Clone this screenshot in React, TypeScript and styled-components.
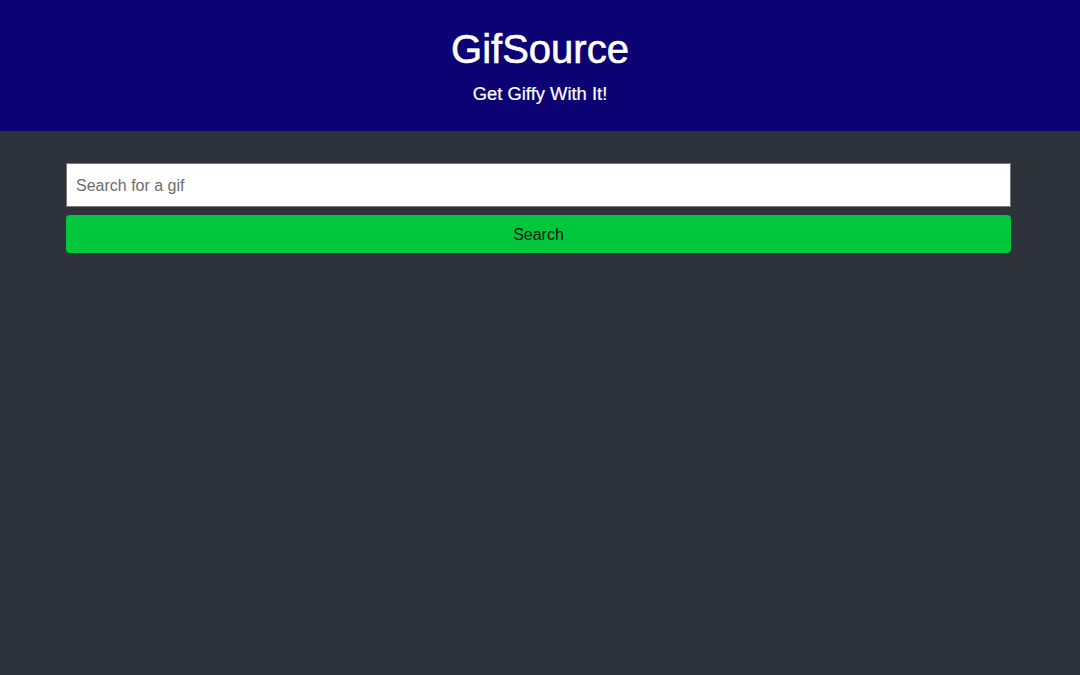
import React from "react";
import styled, { createGlobalStyle } from "styled-components";

const GlobalStyle = createGlobalStyle`
  html, body {
    margin: 0;
    padding: 0;
    background: #2e323b;
    font-family: "Liberation Sans", Arial, sans-serif;
  }
  #root { min-height: 675px; background: #2e323b; }
`;

const Header = styled.header`
  background: #0c0273;
  height: 131px;
  box-sizing: border-box;
  padding-top: 26px;
  display: flex;
  flex-direction: column;
  align-items: center;
  color: #ffffff;
`;

const Title = styled.h1`
  margin: 0;
  font-size: 40px;
  font-weight: 400;
  line-height: 46px;
  -webkit-text-stroke: 0.6px #ffffff;
`;

const Subtitle = styled.p`
  margin: 11px 0 0;
  font-size: 18.4px;
  line-height: 22px;
  -webkit-text-stroke: 0.2px #ffffff;
`;

const Main = styled.main`
  padding: 32px 69px 0 66px;
  display: flex;
  flex-direction: column;
  gap: 8px;
`;

const Input = styled.input`
  box-sizing: border-box;
  width: 100%;
  height: 44px;
  border: 1px solid #7a7a7a;
  border-radius: 0;
  padding: 2px 9px 0;
  font-family: inherit;
  font-size: 16px;
  color: #333;
  background: #fff;
  outline: none;
  &::placeholder { color: #6c6c6c; }
`;

const Button = styled.button`
  box-sizing: border-box;
  width: 100%;
  height: 38px;
  border: none;
  border-radius: 4px;
  padding: 2px 0 0;
  background: #00c73c;
  color: #111;
  font-family: inherit;
  font-size: 16px;
  cursor: pointer;
`;

export default function App() {
  return (
    <>
      <GlobalStyle />
      <Header>
        <Title>GifSource</Title>
        <Subtitle>Get Giffy With It!</Subtitle>
      </Header>
      <Main>
        <Input placeholder="Search for a gif" />
        <Button>Search</Button>
      </Main>
    </>
  );
}
